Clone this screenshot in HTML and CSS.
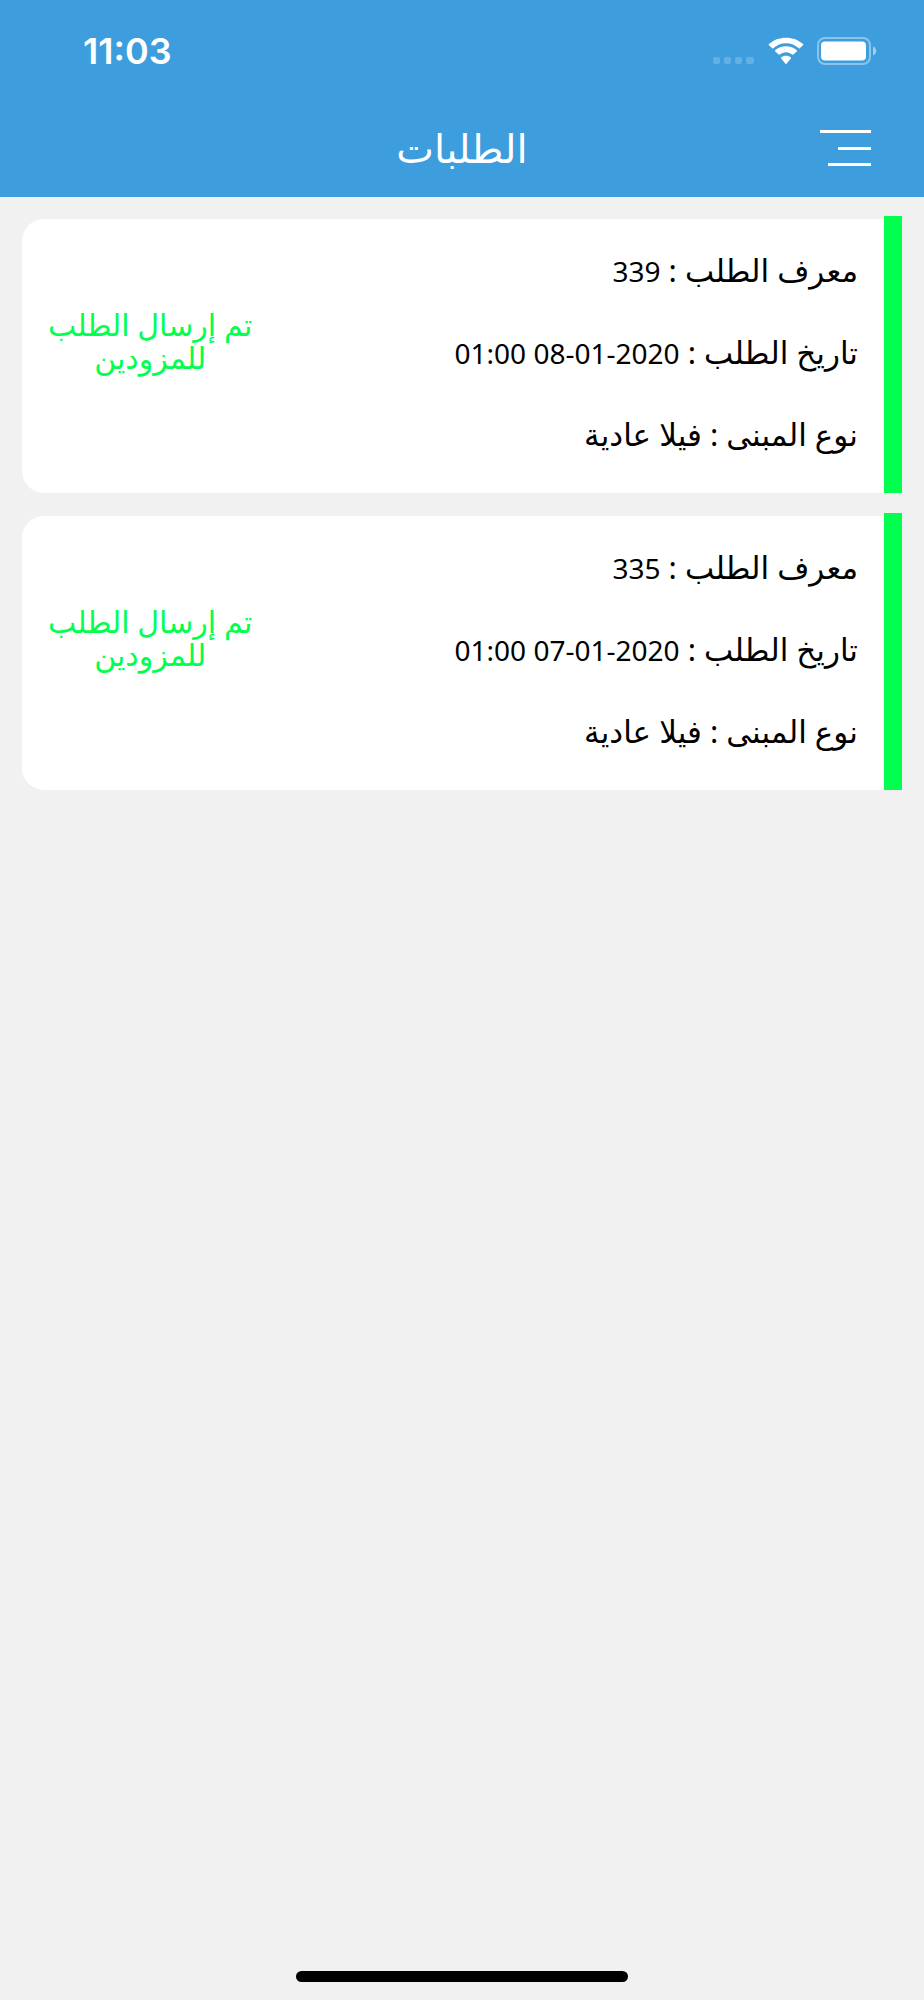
FILE: index.html
```html
<!DOCTYPE html>
<html lang="ar" dir="rtl">
<head>
<meta charset="UTF-8">
<meta name="viewport" content="width=device-width, initial-scale=1.0">
<title>الطلبات</title>
<link rel="stylesheet" href="styles.css">
</head>
<body>

<header class="header">
    <div class="status-bar" dir="ltr">
        <span class="time">11:03</span>
        <div class="status-icons">
            <svg class="dots" width="42" height="28" viewBox="0 0 42 28" fill="#fff" fill-opacity="0.2">
                <rect x="0" y="20" width="7" height="7" rx="2"/>
                <rect x="11" y="20" width="7" height="7" rx="2"/>
                <rect x="22" y="20" width="7" height="7" rx="2"/>
                <rect x="33" y="20" width="8" height="7" rx="2"/>
            </svg>
            <svg class="wifi" width="36" height="28" viewBox="0 0 36 28" fill="#fff">
                <path d="M18 6.2c4.9 0 9.400 1.900 12.700 5.100.3.300.7.300 1 0l3.400-3.100c.3-.3.300-.8 0-1.100C30.500 2.900 24.500.7 18 .7S5.500 2.900.9 7.100c-.3.300-.3.800 0 1.100l3.400 3.100c.3.300.7.300 1 0C8.600 8.100 13.100 6.200 18 6.200z"/>
                <path d="M18 15.200c2.400 0 4.600.9 6.300 2.400.3.300.7.300 1 0l3.500-3.200c.3-.3.300-.8 0-1.100-2.900-2.600-6.700-4-10.800-4s-7.900 1.400-10.800 4c-.3.300-.3.800 0 1.100l3.500 3.200c.3.300.7.300 1 0 1.700-1.500 3.900-2.400 6.300-2.400z"/>
                <path d="M22.900 21.400c.3-.3.300-.7 0-1-1.300-1.100-3-1.700-4.900-1.700s-3.600.6-4.900 1.700c-.3.300-.3.700 0 1l4.400 5.400c.3.300.7.300 1 0z"/>
            </svg>
            <svg class="battery" width="60" height="28" viewBox="0 0 60 28">
                <rect x="1" y="1" width="52" height="26" rx="7" fill="none" stroke="#fff" stroke-opacity="0.4" stroke-width="2"/>
                <rect x="4" y="4.500" width="45" height="19" rx="4" fill="#fff"/>
                <path d="M56 9.500c2 .8 3.200 2.600 3.200 4.500s-1.200 3.700-3.200 4.500z" fill="#fff" fill-opacity="0.5"/>
            </svg>
        </div>
    </div>
    <div class="nav-bar">
        <button class="menu-btn" type="button" aria-label="القائمة">
            <svg width="51" height="36" viewBox="0 0 51 36" fill="#fff">
                <rect x="0" y="0" width="51" height="3"/>
                <rect x="18" y="17" width="33" height="3"/>
                <rect x="8" y="33" width="43" height="3"/>
            </svg>
        </button>
        <h1 class="title">الطلبات</h1>
    </div>
</header>

<main class="orders">
    <article class="order">
        <div class="order-bar"></div>
        <div class="order-card">
            <div class="order-info">
                <p>معرف الطلب : <span class="num">339</span></p>
                <p>تاريخ الطلب : <span class="num">2020-01-08 01:00</span></p>
                <p>نوع المبنى : فيلا عادية</p>
            </div>
            <p class="order-status">تم إرسال الطلب<br>للمزودين</p>
        </div>
    </article>

    <article class="order">
        <div class="order-bar"></div>
        <div class="order-card">
            <div class="order-info">
                <p>معرف الطلب : <span class="num">335</span></p>
                <p>تاريخ الطلب : <span class="num">2020-01-07 01:00</span></p>
                <p>نوع المبنى : فيلا عادية</p>
            </div>
            <p class="order-status">تم إرسال الطلب<br>للمزودين</p>
        </div>
    </article>
</main>

<footer class="home">
    <div class="home-indicator"></div>
</footer>

</body>
</html>
```

FILE: styles.css
```css
* {
    box-sizing: border-box;
}

body {
    display: flex;
    flex-direction: column;
    min-height: 100vh;
    margin: 0;
    background-color: #f1f1f1;
    color: #000;
    font-family: "Noto Sans", "DejaVu Sans", sans-serif;
    font-size: 31px;
}

p {
    margin: 0;
}

/* header */
.header {
    background-color: #3e9ddc;
    color: #fff;
}

.status-bar {
    display: flex;
    justify-content: space-between;
    align-items: center;
    height: 101px;
    padding: 0 47px 0 83px;
}

.time {
    font-family: Inter, sans-serif;
    font-size: 36px;
    font-weight: 600;
}

.status-icons {
    display: flex;
    gap: 13px;
}

.nav-bar {
    display: grid;
    grid-template-columns: 1fr auto 1fr;
    align-items: center;
    height: 96px;
    padding: 0 53px 3px;
}

.menu-btn {
    justify-self: start;
    padding: 0;
    border: none;
    background: none;
    line-height: 0;
    cursor: pointer;
}

.title {
    margin: 0;
    font-size: 40px;
    font-weight: normal;
    line-height: 56px;
}

/* orders */
.orders {
    flex: 1;
    display: flex;
    flex-direction: column;
    gap: 20px;
    padding: 19px 22px;
}

.order {
    display: flex;
}

.order-bar {
    width: 18px;
    background-color: #00ff4e;
}

.order-card {
    flex: 1;
    display: flex;
    justify-content: space-between;
    align-items: flex-start;
    margin-top: 3px;
    padding: 32px 26px 40px;
    background-color: #fff;
    border-radius: 22px 0 0 22px;
}

.order-info {
    display: grid;
    gap: 44px;
    line-height: 38px;
}

.num {
    font-size: 28px;
    line-height: 1;
}

.order-status {
    margin-top: 57px;
    color: #00ff4e;
    font-size: 30px;
    line-height: 33px;
    text-align: center;
}

/* home indicator */
.home {
    display: flex;
    justify-content: center;
    padding-bottom: 18px;
}

.home-indicator {
    width: 36%;
    height: 11px;
    border-radius: 6px;
    background-color: #000;
}
```
